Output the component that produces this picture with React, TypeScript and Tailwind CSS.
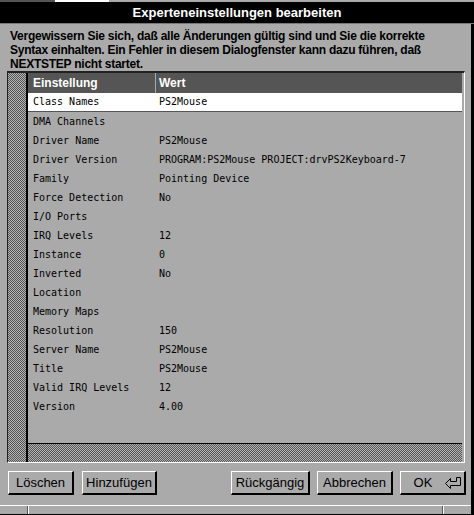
const rows: [string, string][] = [
  ["Class Names", "PS2Mouse"],
  ["DMA Channels", ""],
  ["Driver Name", "PS2Mouse"],
  ["Driver Version", "PROGRAM:PS2Mouse PROJECT:drvPS2Keyboard-7"],
  ["Family", "Pointing Device"],
  ["Force Detection", "No"],
  ["I/O Ports", ""],
  ["IRQ Levels", "12"],
  ["Instance", "0"],
  ["Inverted", "No"],
  ["Location", ""],
  ["Memory Maps", ""],
  ["Resolution", "150"],
  ["Server Name", "PS2Mouse"],
  ["Title", "PS2Mouse"],
  ["Valid IRQ Levels", "12"],
  ["Version", "4.00"],
];

const checker =
  "bg-[image:repeating-conic-gradient(#555555_0%_25%,#b4b4b4_0%_50%)] bg-[length:2px_2px]";

function Button({ label, w, children }: { label: string; w: string; children?: React.ReactNode }) {
  return (
    <div
      className={`${w} h-[24px] flex items-center justify-center border-t border-l border-t-white border-l-white border-r-2 border-b-2 border-r-black border-b-black bg-[#aaaaaa] text-[13px] text-black`}
    >
      <span>{label}</span>
      {children}
    </div>
  );
}

export default function App() {
  return (
    <div className="w-[474px] h-[515px] bg-[#aaaaaa] flex flex-col overflow-hidden font-['Liberation_Sans',Arial,sans-serif]">
      {/* window behind */}
      <div className="h-[2px] flex">
        <div className="w-[55px] bg-[#555555]" />
        <div className="w-[54px] bg-white" />
        <div className="flex-1 bg-[#aaaaaa]" />
      </div>

      {/* title bar */}
      <div className="h-[21px] bg-black text-white font-bold text-[13px] flex items-center justify-center">
        Experteneinstellungen bearbeiten
      </div>
      <div className="h-[1px] bg-[#777777]" />

      <div className="flex-1 flex flex-col border-r-[3px] border-black">
        <p className="h-[47px] pl-[10px] pt-[5px] text-[12px] leading-[14px] font-bold text-black tracking-[-0.25px] whitespace-nowrap">
          Vergewissern Sie sich, daß alle Änderungen gültig sind und Sie die korrekte
          <br />
          Syntax einhalten. Ein Fehler in diesem Dialogfenster kann dazu führen, daß
          <br />
          NEXTSTEP nicht startet.
        </p>

        {/* table frame */}
        <div className="ml-[7px] w-[458px] h-[392px] flex border-t-2 border-l border-t-[#222222] border-l-[#222222] border-b border-r border-b-white border-r-white">
          <div className={`w-[18px] h-full ${checker}`} />
          <div className="w-[2px] bg-black" />
          <div className="w-[434px] flex flex-col font-['DejaVu_Sans_Mono',monospace] text-[10px] text-black">
            <div className="h-[20px] bg-[#555555] flex items-center text-white font-bold text-[12px] font-['Liberation_Sans',Arial,sans-serif]">
              <div className="w-[127px] pl-[5px]">Einstellung</div>
              <div className="w-[1px] h-full bg-[#aaaaaa]" />
              <div className="pl-[3px]">Wert</div>
            </div>
            <div className="flex-1 flex flex-col">
              {rows.map(([k, v], i) => (
                <div
                  key={k}
                  className={`h-[19px] flex items-center pb-[1px] ${
                    i === 0 ? "bg-white border-b border-[#555555]" : ""
                  }`}
                >
                  <div className="w-[131px] pl-[5px] whitespace-pre">{k}</div>
                  <div className="whitespace-pre">{v}</div>
                </div>
              ))}
            </div>
            <div className="h-[1px] bg-black" />
            <div className={`h-[18px] ${checker}`} />
          </div>
        </div>

        {/* buttons */}
        <div className="mt-[8px] pl-[8px] flex items-start">
          <Button label="Löschen" w="w-[66px]" />
          <div className="w-[8px]" />
          <Button label="Hinzufügen" w="w-[75px]" />
          <div className="w-[74px]" />
          <Button label="Rückgängig" w="w-[79px]" />
          <div className="w-[7px]" />
          <Button label="Abbrechen" w="w-[76px]" />
          <div className="w-[7px]" />
          <Button label="OK" w="w-[66px] gap-[13px] pl-[10px]">
            <svg width="16" height="12" viewBox="0 0 16 12" className="mt-[1px]">
              <path
                d="M0.5 6.5 L5.5 1.5 L5.5 4.5 L11.5 4.5 L11.5 0.5 L15.5 0.5 L15.5 8.5 L5.5 8.5 L5.5 11.5 Z"
                fill="none"
                stroke="black"
                strokeWidth="1"
              />
            </svg>
          </Button>
        </div>

        <div className="flex-1" />
        {/* resize bar */}
        <div className="h-[10px] flex border-t border-white border-b border-b-black">
          <div className="w-[28px] border-r border-[#555555]" />
          <div className="w-[1px] bg-white" />
          <div className="w-[414px] border-r border-[#555555]" />
          <div className="w-[1px] bg-white" />
          <div className="flex-1" />
        </div>
      </div>
    </div>
  );
}
